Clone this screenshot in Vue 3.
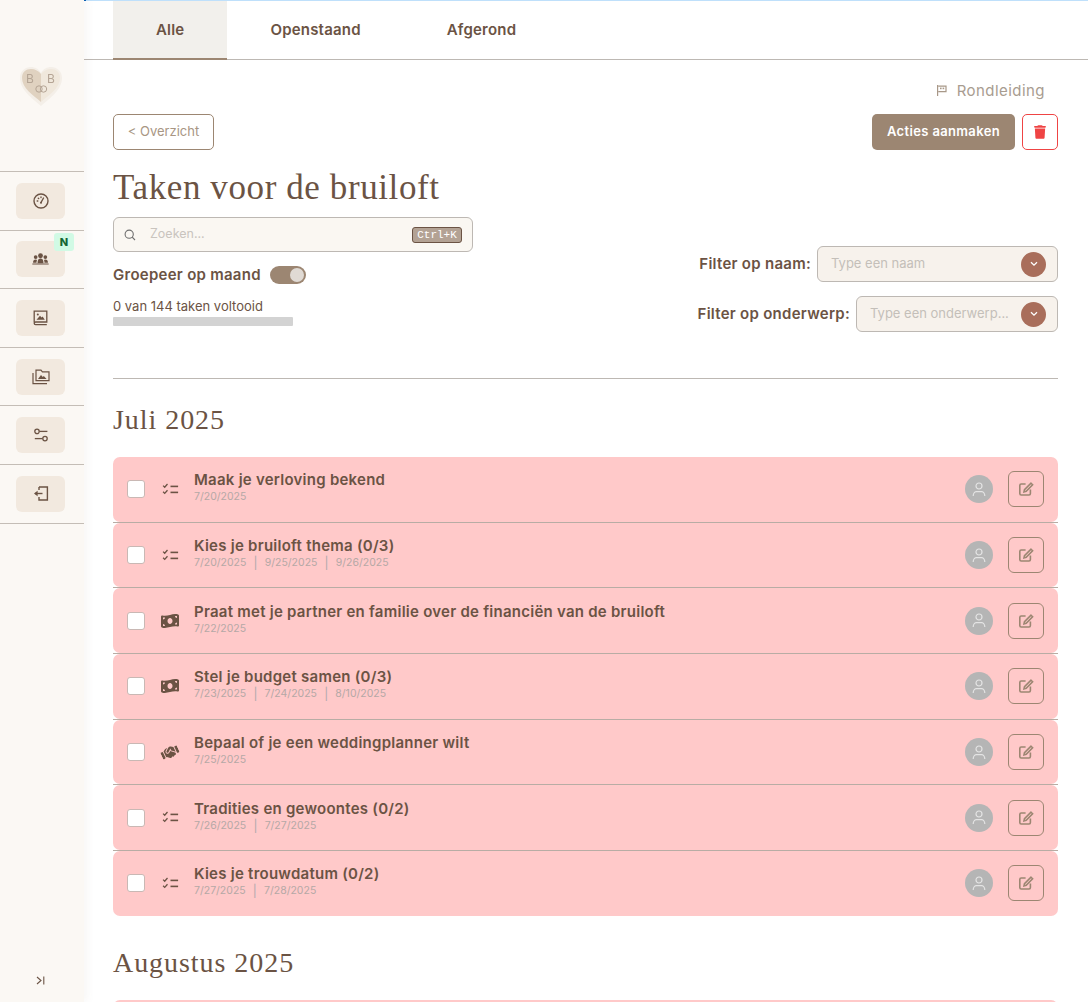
<template>
  <div class="page">
    <aside class="sidebar">
      <div class="logo">
        <svg class="logo__heart" width="48" height="44" viewBox="0 0 48 44">
          <path d="M24 41 C15 33 3 25 3 13 C3 6 8 2 14 2 C18 2 22 4 24 8 C26 4 30 2 34 2 C40 2 45 6 45 13 C45 25 33 33 24 41Z" fill="#f4efe8" />
          <path d="M24 37 C16 30 5 23 5 13 C5 7 9 4 14 4 C18 4 22 6 24 9Z" fill="#e0d2c0" />
          <path d="M24 37 C32 30 43 23 43 13 C43 7 39 4 34 4 C30 4 26 6 24 9Z" fill="#f0e8dc" />
          <circle cx="22" cy="24" r="3.2" fill="none" stroke="#b5a595" stroke-width="1" />
          <circle cx="26.5" cy="24" r="3.2" fill="none" stroke="#b5a595" stroke-width="1" />
        </svg>
        <span class="logo__letter logo__letter--left">B</span>
        <span class="logo__letter logo__letter--right">B</span>
      </div>

      <nav class="nav">
        <div v-for="item in navItems" :key="item" class="nav__row">
          <button type="button" class="nav__btn">
            <svg v-if="item === 'gauge'" width="16" height="16" viewBox="0 0 16 16" fill="none" stroke="#6b5344" stroke-width="1.4">
              <circle cx="8" cy="8" r="7" />
              <path d="M8 9.5 L10.5 5" stroke-linecap="round" />
              <circle cx="8" cy="9.8" r="1" fill="#6b5344" stroke="none" />
              <path d="M4.2 8h.6M5.3 5.2l.4.4M8 4v.6" stroke-linecap="round" />
            </svg>
            <svg v-else-if="item === 'people'" width="17" height="13" viewBox="0 0 18 14" fill="#6b5344">
              <circle cx="9" cy="3" r="2.6" />
              <circle cx="3.8" cy="4.4" r="2" />
              <circle cx="14.2" cy="4.4" r="2" />
              <path d="M5.8 11 C5.8 7.5 7 6 9 6 C11 6 12.2 7.5 12.2 11Z" />
              <path d="M1 10.5 C1 8 2 7 3.8 7 C4.6 7 5 7.2 5.2 7.5 C4.8 8.5 4.7 9.5 4.7 10.5Z" />
              <path d="M17 10.5 C17 8 16 7 14.2 7 C13.4 7 13 7.2 12.8 7.5 C13.2 8.5 13.3 9.5 13.3 10.5Z" />
              <rect x="0" y="11.4" width="18" height="1" rx=".5" />
            </svg>
            <svg v-else-if="item === 'book'" width="15" height="16" viewBox="0 0 15 16" fill="none" stroke="#6b5344" stroke-width="1.3">
              <path d="M1.2 12.5 V1.2 H13.8 V12 H2.6 C1.8 12 1.2 12.5 1.2 13.3 C1.2 14.1 1.8 14.6 2.6 14.6 H13.8" />
              <circle cx="4.8" cy="4.4" r="1" fill="#6b5344" stroke="none" />
              <path d="M3.5 9.7 L7 5.7 L8.6 7.6 L9.6 6.6 L11.8 9.7Z" fill="#6b5344" stroke="none" />
            </svg>
            <svg v-else-if="item === 'folder'" width="18" height="16" viewBox="0 0 18 16" fill="none" stroke="#6b5344" stroke-width="1.2">
              <path d="M4 11.6 V1.2 H9 L10.4 2.8 H17 V11.6Z" />
              <path d="M1 4 V14.6 H15" />
              <path d="M6 10 L9 6 L10.8 8 L11.8 7 L14.6 10Z" fill="#6b5344" stroke="none" />
            </svg>
            <svg v-else-if="item === 'sliders'" width="14" height="14" viewBox="0 0 14 14" fill="none" stroke="#6b5344" stroke-width="1.3">
              <circle cx="3" cy="3.4" r="2.2" />
              <path d="M5.4 3.4 H13.4" />
              <circle cx="11" cy="10.6" r="2.2" />
              <path d="M0.8 10.6 H8.6" />
            </svg>
            <svg v-else width="16" height="15" viewBox="0 0 16 15" fill="none" stroke="#6b5344" stroke-width="1.4">
              <path d="M6 1 H14.4 V14 H6 V11" />
              <path d="M6 1 V4" />
              <path d="M9.5 7.5 H2" />
              <path d="M4.6 4.8 L1 7.5 L4.6 10.2Z" fill="#6b5344" stroke="none" />
            </svg>
          </button>
          <span v-if="item === 'people'" class="nav__badge">N</span>
        </div>
      </nav>

      <button type="button" class="collapse">
        <svg width="9" height="9" viewBox="0 0 9 9" fill="none" stroke="#6b5344" stroke-width="1.1">
          <path d="M1 1 L5 4.5 L1 8" />
          <path d="M7.8 .5 V8.5" />
        </svg>
      </button>
    </aside>

    <main class="main">
      <div class="topline"></div>
      <div class="tabs">
        <button
          v-for="tab in tabs"
          :key="tab"
          type="button"
          class="tabs__item"
          :class="{ 'tabs__item--active': tab === 'Alle' }"
        >
          {{ tab }}
        </button>
      </div>

      <div class="content">
        <div class="tour">
          <svg width="10" height="11" viewBox="0 0 10 11" fill="#a89888">
            <path d="M0 0 H1.2 V11 H0Z" />
            <path d="M1.2 .5 H9.6 V7.2 H1.2 V6 H8.4 V1.7 H1.2Z" />
            <rect x="3" y="2.6" width="1.6" height="1.6" />
            <rect x="5.6" y="2.6" width="1.6" height="1.6" />
          </svg>
          <span>Rondleiding</span>
        </div>

        <div class="actions">
          <button type="button" class="btn-back">&lt; Overzicht</button>
          <div class="actions__right">
            <button type="button" class="btn-primary">Acties aanmaken</button>
            <button type="button" class="btn-delete">
              <svg width="12" height="14" viewBox="0 0 448 512" fill="#ef4444">
                <path d="M135.2 17.7L128 32H32C14.3 32 0 46.3 0 64S14.3 96 32 96H416c17.7 0 32-14.3 32-32s-14.3-32-32-32H320l-7.2-14.3C307.4 6.8 296.3 0 284.2 0H163.8c-12.1 0-23.2 6.8-28.6 17.7zM416 128H32L53.2 467c1.6 25.3 22.6 45 47.9 45H346.9c25.3 0 46.3-19.7 47.9-45L416 128z" />
              </svg>
            </button>
          </div>
        </div>

        <h1 class="title">Taken voor de bruiloft</h1>

        <div class="controls">
          <div class="controls__left">
            <div class="search">
              <svg width="12" height="12" viewBox="0 0 12 12" fill="none" stroke="#6f6f6f" stroke-width="1.1">
                <circle cx="5.2" cy="5.2" r="4.1" />
                <path d="M8.2 8.2 L11 11" />
              </svg>
              <span class="search__placeholder">Zoeken...</span>
              <kbd class="search__kbd">Ctrl+K</kbd>
            </div>
            <div class="group-toggle">
              <span class="group-toggle__label">Groepeer op maand</span>
              <span class="switch"><span class="switch__knob"></span></span>
            </div>
            <div class="progress-label">0 van 144 taken voltooid</div>
            <div class="progress"></div>
          </div>

          <div class="controls__right">
            <div v-for="filter in filters" :key="filter.label" class="filter">
              <label class="filter__label">{{ filter.label }}</label>
              <div class="filter__select" :style="{ width: filter.width + 'px' }">
                <span class="filter__placeholder">{{ filter.placeholder }}</span>
                <span class="filter__arrow">
                  <svg width="8" height="6" viewBox="0 0 8 6" fill="none" stroke="#fff" stroke-width="1.3">
                    <path d="M1 1.2 L4 4.2 L7 1.2" />
                  </svg>
                </span>
              </div>
            </div>
          </div>
        </div>

        <hr class="divider" />

        <h2 class="month">Juli 2025</h2>

        <div class="tasks">
          <div v-for="task in tasks" :key="task.title" class="tasks__row">
            <div class="task">
              <span class="task__check"></span>
              <span class="task__icon">
                <svg v-if="task.icon === 'list'" width="17" height="13" viewBox="0 0 16 13" fill="none" stroke="#6b5344" stroke-width="1.3">
                  <path d="M.6 2.6 L2.2 4.2 L5 1" />
                  <path d="M.6 8.8 L2.2 10.4 L5 7.2" />
                  <path d="M8 3.4 H15.6" stroke-width="1.6" />
                  <path d="M8 9.4 H15.6" stroke-width="1.6" />
                </svg>
                <svg v-else-if="task.icon === 'money'" width="18" height="16" viewBox="0 0 576 512" fill="#6b5344">
                  <path d="M0 112.5V422.3c0 18 10.1 35 27 41.3c87 32.5 174 10.3 261-11.9c79.8-20.3 159.6-40.7 239.3-18.9c23 6.3 48.7-9.5 48.7-33.4V89.7c0-18-10.1-35-27-41.3C462 15.9 375 38.1 288 60.3C208.2 80.6 128.4 100.9 48.7 79.1C25.6 72.8 0 88.6 0 112.5zM288 352c-44.2 0-80-43-80-96s35.8-96 80-96s80 43 80 96s-35.8 96-80 96zM64 352c35.3 0 64 28.7 64 64H64V352zm64-208c0 35.3-28.7 64-64 64V144h64zM512 304v64H448c0-35.3 28.7-64 64-64zM448 96h64v64c-35.3 0-64-28.7-64-64z" />
                </svg>
                <svg v-else class="task__shake" width="20" height="17" viewBox="0 0 640 512" fill="#6b5344">
                  <path d="M323.4 85.2l-96.8 78.4c-16.1 13-19.2 36.4-7 53.1c12.9 17.8 38 21.3 55.3 7.8l99.3-77.2c7-5.4 17-4.2 22.5 2.8s4.2 17-2.8 22.5l-20.9 16.2L512 316.8V128h-.7l-3.9-2.5L434.8 79c-15.3-9.8-33.2-15-51.4-15c-21.8 0-43 7.5-60 21.2zm22.8 124.4l-51.7 40.2C263 274.4 217.3 268 193.7 235.6c-22.2-30.5-16.6-73.1 12.7-96.8l83.2-67.3c-11.6-4.9-24.1-7.4-36.8-7.4C234 64 215.7 69.6 200 80l-72 48V352h28.2l91.4 83.4c19.6 17.9 49.9 16.5 67.8-3.1c5.5-6.1 9.2-13.2 11.1-20.6l17 15.6c19.5 17.9 49.9 16.6 67.8-2.9c4.5-4.9 7.8-10.6 9.9-16.5c19.4 13 45.8 10.3 62.1-7.5c17.9-19.5 16.6-49.9-2.9-67.8l-134.2-123zM16 128c-8.8 0-16 7.2-16 16V352c0 17.7 14.3 32 32 32H64c17.7 0 32-14.3 32-32V128H16zM544 128V352c0 17.7 14.3 32 32 32h32c17.7 0 32-14.3 32-32V144c0-8.8-7.2-16-16-16H544z" />
                </svg>
              </span>
              <div class="task__body">
                <div class="task__title">{{ task.title }}</div>
                <div class="task__dates">
                  <template v-for="(date, index) in task.dates" :key="date">
                    <span v-if="index > 0" class="task__sep">|</span>
                    <span>{{ date }}</span>
                  </template>
                </div>
              </div>
              <span class="task__avatar">
                <svg width="14" height="15" viewBox="0 0 14 15" fill="none" stroke="#e4e4e4" stroke-width="1.2">
                  <circle cx="7" cy="4" r="3" />
                  <path d="M1.2 14 C1.2 10.8 3.2 9.6 4.4 9.6 H9.6 C10.8 9.6 12.8 10.8 12.8 14" />
                </svg>
              </span>
              <button type="button" class="task__edit">
                <svg width="15" height="14" viewBox="0 0 15 14" fill="none" stroke="#9c8672" stroke-width="1.6">
                  <path d="M6.6 2 H2.2 C1.4 2 .8 2.6 .8 3.4 V11.6 C.8 12.4 1.4 13 2.2 13 H10 C10.8 13 11.4 12.4 11.4 11.6 V7.6" />
                  <path d="M12 1.2 L13.6 2.8 L7.2 9.2 L5 9.8 L5.5 7.6Z" />
                </svg>
              </button>
            </div>
          </div>
        </div>

        <h2 class="month month--next">Augustus 2025</h2>
        <div class="task task--peek"></div>
      </div>
    </main>
  </div>
</template>

<script setup>
const navItems = ['gauge', 'people', 'book', 'folder', 'sliders', 'exit']

const tabs = ['Alle', 'Openstaand', 'Afgerond']

const filters = [
  { label: 'Filter op naam:', placeholder: 'Type een naam', width: 241 },
  { label: 'Filter op onderwerp:', placeholder: 'Type een onderwerp...', width: 202 }
]

const tasks = [
  { title: 'Maak je verloving bekend', icon: 'list', dates: ['7/20/2025'] },
  { title: 'Kies je bruiloft thema (0/3)', icon: 'list', dates: ['7/20/2025', '9/25/2025', '9/26/2025'] },
  { title: 'Praat met je partner en familie over de financiën van de bruiloft', icon: 'money', dates: ['7/22/2025'] },
  { title: 'Stel je budget samen (0/3)', icon: 'money', dates: ['7/23/2025', '7/24/2025', '8/10/2025'] },
  { title: 'Bepaal of je een weddingplanner wilt', icon: 'shake', dates: ['7/25/2025'] },
  { title: 'Tradities en gewoontes (0/2)', icon: 'list', dates: ['7/26/2025', '7/27/2025'] },
  { title: 'Kies je trouwdatum (0/2)', icon: 'list', dates: ['7/27/2025', '7/28/2025'] }
]
</script>

<style>
html,
body {
  margin: 0;
  background: #fff;
  overflow: hidden;
}
</style>

<style scoped>
.page {
  display: flex;
  height: 1002px;
  overflow: hidden;
  font-family: Inter, "Liberation Sans", sans-serif;
  color: #6b5344;
}

button {
  font-family: inherit;
  cursor: pointer;
}

.sidebar {
  position: relative;
  z-index: 2;
  flex: 0 0 84px;
  display: flex;
  flex-direction: column;
  background: #fbf8f4;
  box-shadow: 3px 0 8px rgba(120, 100, 80, 0.06);
}

.logo {
  position: relative;
  height: 171px;
  filter: blur(0.4px);
}

.logo__heart {
  position: absolute;
  left: 17px;
  top: 65px;
}

.logo__letter {
  position: absolute;
  top: 71px;
  font-size: 12px;
  color: #b5a595;
}

.logo__letter--left {
  left: 26px;
}

.logo__letter--right {
  left: 47px;
}

.nav {
  border-top: 1px solid #c4bdb6;
}

.nav__row {
  position: relative;
  box-sizing: border-box;
  height: 58.6px;
  display: flex;
  justify-content: center;
  align-items: center;
  padding-right: 3px;
  border-bottom: 1px solid #c4bdb6;
}

.nav__btn {
  width: 49px;
  height: 36px;
  padding: 0;
  display: flex;
  align-items: center;
  justify-content: center;
  border: 0;
  border-radius: 6px;
  background: #f2e9df;
}

.nav__badge {
  position: absolute;
  top: 2px;
  left: 54px;
  width: 20px;
  height: 18px;
  border-radius: 3px;
  background: #d1fae5;
  color: #166534;
  font-size: 11px;
  font-weight: 800;
  line-height: 18px;
  text-align: center;
}

.collapse {
  margin-top: auto;
  margin-bottom: 17px;
  margin-right: 3px;
  align-self: center;
  height: 9px;
  padding: 0;
  display: flex;
  border: 0;
  background: none;
}

.main {
  flex: 1;
  min-width: 0;
  position: relative;
}

.topline {
  height: 1px;
  background: #bfe0fb;
  border-left: 2px solid #0a5fb4;
}

.tabs {
  display: flex;
  height: 58px;
  padding-left: 29px;
  border-bottom: 1px solid #bdb8b3;
}

.tabs__item {
  padding: 0 43px 1px;
  height: 59px;
  border: 0;
  border-bottom: 2px solid transparent;
  background: none;
  color: #6b5344;
  font-size: 15px;
  font-weight: 600;
  letter-spacing: 0.2px;
}

.tabs__item--active {
  background: #f2f0ec;
  border-bottom-color: #9c8672;
}

.content {
  padding: 0 30px 0 29px;
}

.tour {
  box-sizing: border-box;
  display: flex;
  justify-content: flex-end;
  align-items: center;
  gap: 10px;
  height: 54px;
  padding: 6px 13px 0 0;
  color: #a89c90;
  font-size: 15px;
  letter-spacing: 0.45px;
}

.actions {
  display: flex;
  justify-content: space-between;
}

.actions__right {
  display: flex;
  gap: 7px;
}

.btn-back {
  width: 101px;
  height: 36px;
  padding: 0 0 2px;
  border: 1px solid #9c8672;
  border-radius: 5px;
  background: #fff;
  color: #a89684;
  font-size: 13px;
}

.btn-primary {
  width: 143px;
  height: 36px;
  padding: 0 0 2px;
  border: 0;
  border-radius: 5px;
  background: #9c8672;
  color: #fff;
  font-size: 13px;
  font-weight: 600;
  letter-spacing: 0.35px;
}

.btn-delete {
  width: 36px;
  height: 36px;
  padding: 0;
  display: flex;
  align-items: center;
  justify-content: center;
  border: 1px solid #ef4444;
  border-radius: 5px;
  background: #fff;
}

.title {
  margin: 17px 0 0;
  height: 50px;
  font-family: "Liberation Serif", serif;
  font-size: 35px;
  font-weight: 400;
  line-height: 42px;
  letter-spacing: 0.6px;
  color: #6b5344;
}

.controls {
  display: flex;
  justify-content: space-between;
  height: 161px;
}

.controls__left {
  width: 360px;
}

.search {
  box-sizing: border-box;
  height: 35px;
  display: flex;
  align-items: center;
  padding: 0 10px;
  border: 1px solid #bdb8b3;
  border-radius: 6px;
  background: #faf7f2;
}

.search__placeholder {
  flex: 1;
  margin-left: 14px;
  padding-bottom: 2px;
  font-size: 12.5px;
  color: #c9c4be;
}

.search__kbd {
  width: 50px;
  height: 16px;
  box-sizing: border-box;
  border: 1px solid #6b5344;
  border-radius: 3px;
  background: #b3a294;
  color: #fff;
  font-family: "Liberation Mono", monospace;
  font-size: 11px;
  line-height: 14px;
  text-align: center;
}

.group-toggle {
  display: flex;
  align-items: center;
  gap: 9px;
  margin-top: 14px;
  height: 18px;
  font-size: 15px;
  font-weight: 600;
  letter-spacing: 0.27px;
}

.group-toggle__label {
  padding-bottom: 2px;
}

.switch {
  position: relative;
  width: 36px;
  height: 18px;
  border-radius: 9px;
  background: #9c8672;
}

.switch__knob {
  position: absolute;
  top: 2px;
  right: 2px;
  width: 14px;
  height: 14px;
  border-radius: 50%;
  background: #e0dad4;
}

.progress-label {
  margin-top: 13px;
  font-size: 13px;
  line-height: 18px;
}

.progress {
  width: 180px;
  height: 9px;
  margin-top: 2px;
  border-radius: 1px;
  background: #d3d3d3;
}

.controls__right {
  display: flex;
  flex-direction: column;
  align-items: flex-end;
  gap: 14px;
  padding-top: 29px;
}

.filter {
  display: flex;
  align-items: center;
  gap: 6px;
}

.filter__label {
  padding-bottom: 2px;
  font-size: 15px;
  font-weight: 600;
  letter-spacing: 0.27px;
}

.filter__select {
  box-sizing: border-box;
  height: 36px;
  display: flex;
  align-items: center;
  justify-content: space-between;
  padding: 0 11px 0 13px;
  border: 1px solid #bdb8b3;
  border-radius: 6px;
  background: #f7f2ec;
}

.filter__placeholder {
  padding-bottom: 2px;
  font-size: 13px;
  color: #c4bfb9;
}

.filter__arrow {
  width: 25px;
  height: 25px;
  display: flex;
  align-items: center;
  justify-content: center;
  border-radius: 50%;
  background: #a96e5b;
}

.divider {
  margin: 0;
  border: 0;
  border-top: 1px solid #bdb8b3;
}

.month {
  margin: 23px 0 0;
  height: 55px;
  font-family: "Liberation Serif", serif;
  font-size: 28px;
  font-weight: 400;
  line-height: 36px;
  letter-spacing: 0.95px;
}

.month--next {
  margin-top: 29px;
  height: 55px;
}

.tasks {
  display: flex;
  flex-direction: column;
}

.tasks__row {
  height: 65.7px;
  box-sizing: border-box;
  border-bottom: 1px solid #b8aca4;
}

.tasks__row:last-child {
  height: 64.7px;
  border-bottom: 0;
}

.task {
  box-sizing: border-box;
  height: 64.7px;
  display: flex;
  align-items: center;
  padding: 0 14px;
  border-radius: 7px;
  background: #ffc9c9;
}

.task--peek {
  height: 60px;
}

.task__check {
  flex: none;
  box-sizing: border-box;
  width: 18px;
  height: 18px;
  border: 1px solid #c9b8b4;
  border-radius: 3px;
  background: #fff;
}

.task__icon {
  flex: none;
  width: 18px;
  margin-left: 16px;
  display: flex;
  justify-content: center;
}

.task__shake {
  transform: rotate(-25deg);
}

.task__body {
  flex: 1;
  min-width: 0;
  margin-left: 15px;
  padding-bottom: 3px;
}

.task__title {
  font-size: 15px;
  font-weight: 600;
  line-height: 18px;
  letter-spacing: 0.25px;
}

.task__dates {
  display: flex;
  gap: 7.2px;
  margin-top: 1px;
  font-size: 10.5px;
  line-height: 14px;
  color: #b5a8a6;
}

.task__sep {
  font-size: 12px;
  color: #b0a8ac;
}

.task__avatar {
  flex: none;
  width: 28px;
  height: 28px;
  display: flex;
  align-items: center;
  justify-content: center;
  border-radius: 50%;
  background: #b5b5b5;
}

.task__edit {
  flex: none;
  width: 36px;
  height: 36px;
  margin-left: 15px;
  padding: 0;
  display: flex;
  align-items: center;
  justify-content: center;
  border: 1px solid #9c8672;
  border-radius: 6px;
  background: transparent;
}
</style>
